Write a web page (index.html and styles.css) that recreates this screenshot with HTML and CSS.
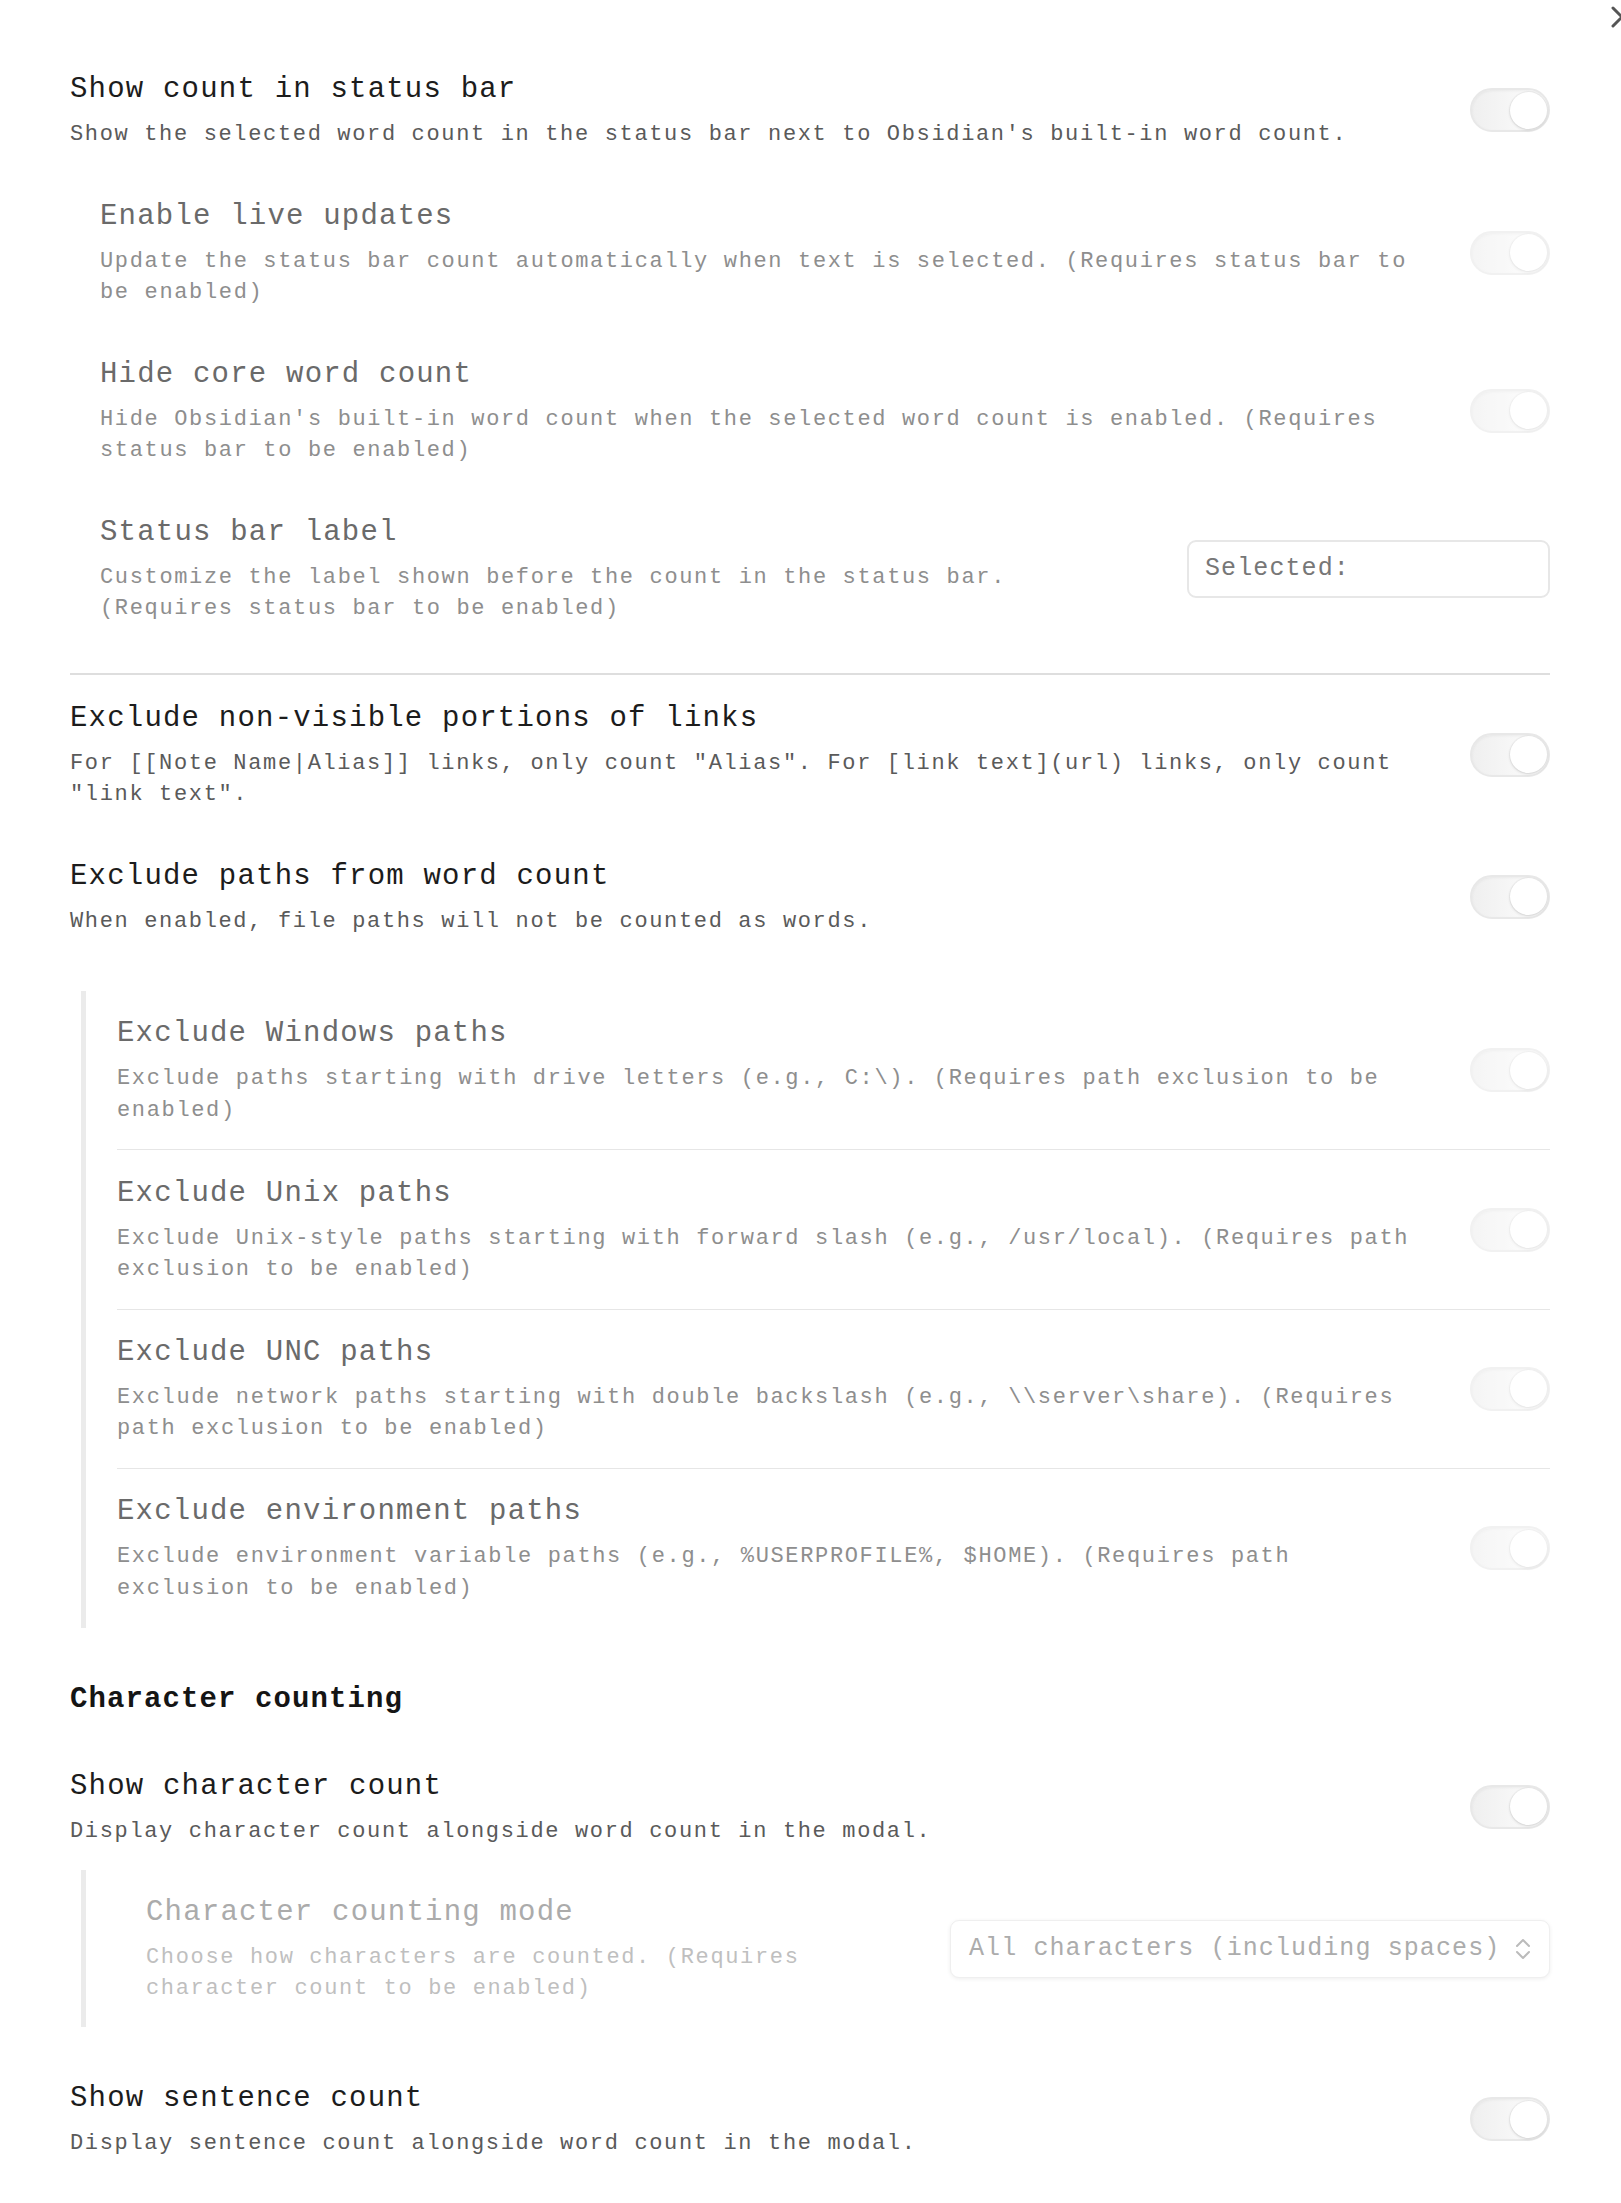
FILE: index.html
```html
<!DOCTYPE html>
<html lang="en">
<head>
<meta charset="utf-8">
<title>Settings</title>
<link rel="stylesheet" href="styles.css">
</head>
<body>
<div class="page">
  <svg class="collapse" width="14" height="24" viewBox="0 0 14 24"><polyline points="2,3 11,12 2,21" fill="none" stroke="#555" stroke-width="3" stroke-linecap="round" stroke-linejoin="round"/></svg>
  <div class="settings">
    <div class="item">
      <div class="info">
        <div class="name">Show count in status bar</div>
        <div class="desc">Show the selected word count in the status bar next to Obsidian's built-in word count.</div>
      </div>
      <div class="control"><div class="toggle"><div class="thumb"></div></div></div>
    </div>

    <div class="group indent">
      <div class="item muted">
        <div class="info">
          <div class="name">Enable live updates</div>
          <div class="desc">Update the status bar count automatically when text is selected. (Requires status bar to be enabled)</div>
        </div>
        <div class="control"><div class="toggle faded"><div class="thumb"></div></div></div>
      </div>
      <div class="item muted">
        <div class="info">
          <div class="name">Hide core word count</div>
          <div class="desc">Hide Obsidian's built-in word count when the selected word count is enabled. (Requires status bar to be enabled)</div>
        </div>
        <div class="control"><div class="toggle faded"><div class="thumb"></div></div></div>
      </div>
      <div class="item muted">
        <div class="info">
          <div class="name">Status bar label</div>
          <div class="desc">Customize the label shown before the count in the status bar. (Requires status bar to be enabled)</div>
        </div>
        <div class="control"><div class="text-input">Selected:</div></div>
      </div>
    </div>

    <div class="item divided">
      <div class="info">
        <div class="name">Exclude non-visible portions of links</div>
        <div class="desc">For [[Note Name|Alias]] links, only count "Alias". For [link text](url) links, only count "link text".</div>
      </div>
      <div class="control"><div class="toggle"><div class="thumb"></div></div></div>
    </div>
    <div class="item">
      <div class="info">
        <div class="name">Exclude paths from word count</div>
        <div class="desc">When enabled, file paths will not be counted as words.</div>
      </div>
      <div class="control"><div class="toggle"><div class="thumb"></div></div></div>
    </div>

    <div class="block spaced">
      <div class="item muted">
        <div class="info">
          <div class="name">Exclude Windows paths</div>
          <div class="desc">Exclude paths starting with drive letters (e.g., C:\). (Requires path exclusion to be enabled)</div>
        </div>
        <div class="control"><div class="toggle faded"><div class="thumb"></div></div></div>
      </div>
      <div class="item muted sep">
        <div class="info">
          <div class="name">Exclude Unix paths</div>
          <div class="desc">Exclude Unix-style paths starting with forward slash (e.g., /usr/local). (Requires path exclusion to be enabled)</div>
        </div>
        <div class="control"><div class="toggle faded"><div class="thumb"></div></div></div>
      </div>
      <div class="item muted sep">
        <div class="info">
          <div class="name">Exclude UNC paths</div>
          <div class="desc">Exclude network paths starting with double backslash (e.g., \\server\share). (Requires path exclusion to be enabled)</div>
        </div>
        <div class="control"><div class="toggle faded"><div class="thumb"></div></div></div>
      </div>
      <div class="item muted sep">
        <div class="info">
          <div class="name">Exclude environment paths</div>
          <div class="desc">Exclude environment variable paths (e.g., %USERPROFILE%, $HOME). (Requires path exclusion to be enabled)</div>
        </div>
        <div class="control"><div class="toggle faded"><div class="thumb"></div></div></div>
      </div>
    </div>

    <div class="heading">Character counting</div>

    <div class="item">
      <div class="info">
        <div class="name">Show character count</div>
        <div class="desc">Display character count alongside word count in the modal.</div>
      </div>
      <div class="control"><div class="toggle"><div class="thumb"></div></div></div>
    </div>

    <div class="block compact">
      <div class="item faint nested">
        <div class="info">
          <div class="name">Character counting mode</div>
          <div class="desc">Choose how characters are counted. (Requires character count to be enabled)</div>
        </div>
        <div class="control">
          <div class="dropdown">
            <span>All characters (including spaces)</span>
            <svg class="updown" width="16" height="22" viewBox="0 0 16 22"><polyline points="2,8 8,2 14,8" fill="none" stroke="#bbb" stroke-width="2" stroke-linecap="round" stroke-linejoin="round"/><polyline points="2,14 8,20 14,14" fill="none" stroke="#bbb" stroke-width="2" stroke-linecap="round" stroke-linejoin="round"/></svg>
          </div>
        </div>
      </div>
    </div>

    <div class="item">
      <div class="info">
        <div class="name">Show sentence count</div>
        <div class="desc">Display sentence count alongside word count in the modal.</div>
      </div>
      <div class="control"><div class="toggle"><div class="thumb"></div></div></div>
    </div>
  </div>
</div>
</body>
</html>
```

FILE: styles.css
```css
html, body {
  margin: 0;
  padding: 0;
  background: #ffffff;
  overflow-x: hidden;
}

body {
  font-family: "Liberation Mono", "DejaVu Sans Mono", monospace;
  color: #1e1e1e;
}

.page {
  position: relative;
  width: 1621px;
  min-height: 2203px;
  overflow: hidden;
}

.collapse {
  position: absolute;
  top: 5px;
  right: -4px;
}

.settings {
  padding: 47px 71px 40px 70px;
  display: flex;
  flex-direction: column;
}

.item {
  display: flex;
  align-items: center;
  padding-top: 23px;
  padding-bottom: 23px;
}

.info {
  flex: 1 1 auto;
  min-width: 0;
  margin-right: 51px;
}

.control {
  flex: 0 0 auto;
  display: flex;
  justify-content: flex-end;
  align-items: center;
}

.name {
  font-size: 29px;
  line-height: 40px;
  letter-spacing: 1.2px;
  color: #1c1c1c;
}

.desc {
  margin-top: 9px;
  font-size: 22px;
  line-height: 31.5px;
  letter-spacing: 1.65px;
  color: #5a5a5a;
}

.muted .name {
  color: #6a6a6a;
}

.muted .desc {
  color: #8e8e8e;
}

.faint .name {
  color: #ababab;
}

.faint .desc {
  color: #bfbfbf;
}

.group {
  margin-bottom: 25px;
}

.indent {
  padding-left: 30px;
}

.nested {
  padding-left: 29px;
}

.divided {
  border-top: 2px solid #dedede;
  padding-top: 24px;
}

.block {
  margin-left: 11px;
  border-left: 5px solid #ebebeb;
  padding-left: 31px;
  margin-bottom: 31px;
}

.block.spaced {
  margin-top: 31px;
}

.block .item {
  padding-top: 23.2px;
  padding-bottom: 23.2px;
}

.block.compact .item {
  padding-top: 22.5px;
  padding-bottom: 22.5px;
}

.block.compact {
  margin-bottom: 29px;
}

.sep {
  border-top: 1px solid #e6e6e6;
}

.heading {
  font-size: 29px;
  line-height: 40px;
  letter-spacing: 1.1px;
  font-weight: bold;
  color: #151515;
  padding: 21px 0 24px;
}

.toggle {
  box-sizing: border-box;
  width: 80px;
  height: 44px;
  border-radius: 22px;
  border: 2px solid #e8e8e8;
  background: linear-gradient(90deg, #efefef 0%, #f7f7f7 55%, #fbfbfb 100%);
  box-shadow: inset 0 1px 3px rgba(0, 0, 0, 0.05);
  display: flex;
  justify-content: flex-end;
  align-items: center;
  padding: 0 1.5px;
}

.thumb {
  width: 37px;
  height: 37px;
  border-radius: 50%;
  background: #ffffff;
  box-shadow: 0 1px 3px rgba(0, 0, 0, 0.14), 0 0 0 1px rgba(0, 0, 0, 0.03);
}

.toggle.faded {
  opacity: 0.6;
}

.text-input {
  box-sizing: border-box;
  width: 363px;
  height: 58px;
  border: 2px solid #e7e7e7;
  border-radius: 9px;
  padding: 0 16px;
  display: flex;
  align-items: center;
  font-size: 25px;
  letter-spacing: 1.1px;
  color: #777777;
  background: #ffffff;
}

.dropdown {
  box-sizing: border-box;
  width: 600px;
  height: 58px;
  border: 1.5px solid #efefef;
  border-radius: 9px;
  box-shadow: 0 1px 4px rgba(0, 0, 0, 0.07);
  padding: 0 18px 0 18px;
  display: flex;
  align-items: center;
  justify-content: space-between;
  font-size: 25px;
  letter-spacing: 1.1px;
  color: #acacac;
  background: #ffffff;
}

.updown {
  flex: 0 0 auto;
}
```
